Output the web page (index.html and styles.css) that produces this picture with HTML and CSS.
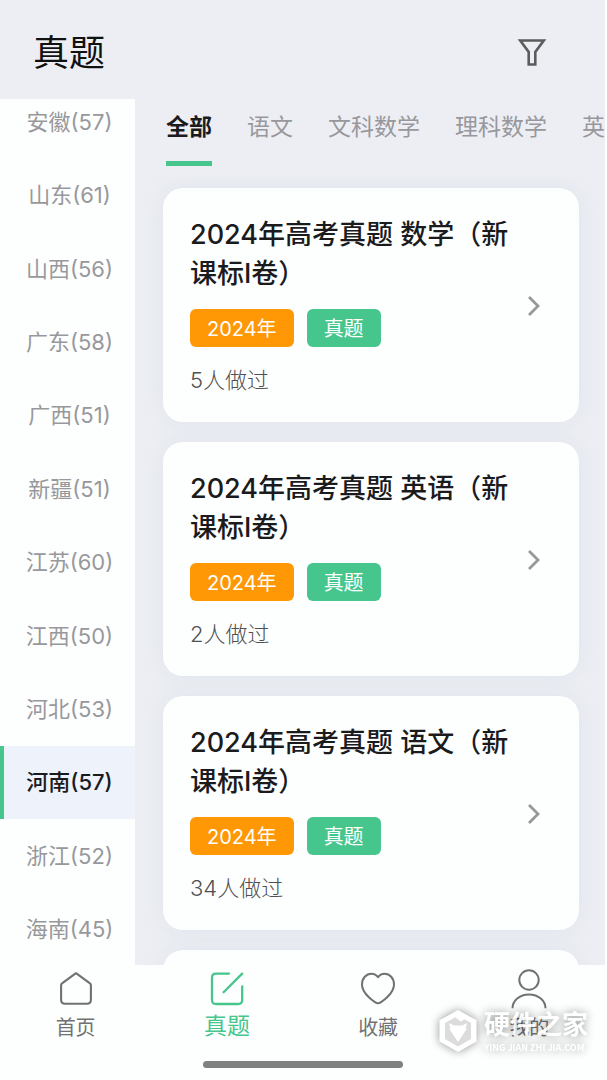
FILE: index.html
```html
<!DOCTYPE html>
<html lang="zh-CN">
<head>
<meta charset="utf-8">
<meta name="viewport" content="width=device-width, initial-scale=1">
<title>真题</title>
<link rel="stylesheet" href="styles.css">
</head>
<body>
<div class="app">
  <header class="header">
    <h1 class="header-title">真题</h1>
    <button class="filter" type="button" aria-label="筛选">
      <svg viewBox="0 0 30 30" width="30" height="30"><path d="M3.2 2.500h23.600L18.300 14v12.500h-6.600V14z" fill="none" stroke="#5c5c5e" stroke-width="2.600"/></svg>
    </button>
  </header>
  <div class="main">
    <nav class="sidebar" aria-label="地区">
      <ul class="regions">
        <li><button class="region" type="button">安徽(57)</button></li>
        <li><button class="region" type="button">山东(61)</button></li>
        <li><button class="region" type="button">山西(56)</button></li>
        <li><button class="region" type="button">广东(58)</button></li>
        <li><button class="region" type="button">广西(51)</button></li>
        <li><button class="region" type="button">新疆(51)</button></li>
        <li><button class="region" type="button">江苏(60)</button></li>
        <li><button class="region" type="button">江西(50)</button></li>
        <li><button class="region" type="button">河北(53)</button></li>
        <li><button class="region region-active" type="button">河南(57)</button></li>
        <li><button class="region" type="button">浙江(52)</button></li>
        <li><button class="region" type="button">海南(45)</button></li>
      </ul>
    </nav>
    <main class="content">
      <div class="tabs">
        <button class="tab tab-active" type="button">全部</button>
        <button class="tab" type="button">语文</button>
        <button class="tab" type="button">文科数学</button>
        <button class="tab" type="button">理科数学</button>
        <button class="tab" type="button">英语</button>
      </div>
      <div class="papers">
        <a class="card" href="#math">
          <div class="card-body">
            <h2 class="card-title">2024年高考真题 数学（新课标I卷）</h2>
            <div class="tags"><span class="tag tag-year">2024年</span><span class="tag tag-type">真题</span></div>
            <p class="count">5人做过</p>
          </div>
          <svg class="chevron" viewBox="0 0 14 22" width="14" height="22"><path d="M2 2l9 9-9 9" fill="none" stroke="#97979b" stroke-width="2.800"/></svg>
        </a>
        <a class="card" href="#english">
          <div class="card-body">
            <h2 class="card-title">2024年高考真题 英语（新课标I卷）</h2>
            <div class="tags"><span class="tag tag-year">2024年</span><span class="tag tag-type">真题</span></div>
            <p class="count">2人做过</p>
          </div>
          <svg class="chevron" viewBox="0 0 14 22" width="14" height="22"><path d="M2 2l9 9-9 9" fill="none" stroke="#97979b" stroke-width="2.800"/></svg>
        </a>
        <a class="card" href="#chinese">
          <div class="card-body">
            <h2 class="card-title">2024年高考真题 语文（新课标I卷）</h2>
            <div class="tags"><span class="tag tag-year">2024年</span><span class="tag tag-type">真题</span></div>
            <p class="count">34人做过</p>
          </div>
          <svg class="chevron" viewBox="0 0 14 22" width="14" height="22"><path d="M2 2l9 9-9 9" fill="none" stroke="#97979b" stroke-width="2.800"/></svg>
        </a>
        <div class="card card-empty"></div>
      </div>
    </main>
  </div>
  <footer class="footer">
    <nav class="tabbar" aria-label="主导航">
      <a class="nav-item" href="#home">
        <svg viewBox="0 0 40 40" width="40" height="40"><path d="M20 4.200L34 14.400q.9.700.9 1.800v14.600q0 4-4 4H9.100q-4 0-4-4V16.200q0-1.100.9-1.800z" fill="none" stroke="#717173" stroke-width="2.100" stroke-linejoin="round"/></svg>
        <span>首页</span>
      </a>
      <a class="nav-item nav-active" href="#papers">
        <svg viewBox="0 0 40 40" width="40" height="40"><path d="M22 4.600H9q-4 0-4 4V31q0 4 4 4h22.200q4 0 4-4V17.500M16.600 23.200L35.200 4.600" fill="none" stroke="#46c68c" stroke-width="2.300" stroke-linecap="round"/></svg>
        <span>真题</span>
      </a>
      <a class="nav-item" href="#favorites">
        <svg viewBox="0 0 40 40" width="40" height="40"><path d="M20 34.400C17 33.600 4 25 4 15.400C4 9.200 8.300 4.700 13.300 4.700C16.200 4.700 18.500 6 20 8.200C21.500 6 23.800 4.700 26.700 4.700C31.700 4.700 36 9.200 36 15.400C36 25 23 33.600 20 34.400z" fill="none" stroke="#717173" stroke-width="2" stroke-linejoin="round"/></svg>
        <span>收藏</span>
      </a>
      <a class="nav-item" href="#me">
        <svg viewBox="0 0 40 40" width="40" height="40"><circle cx="20" cy="11" r="9.700" fill="none" stroke="#717173" stroke-width="2"/><path d="M3.500 39.300C3.500 31.500 10.500 25.400 20 25.400S36.500 31.500 36.500 39.300" fill="none" stroke="#717173" stroke-width="2"/></svg>
        <span>我的</span>
      </a>
    </nav>
    <div class="home-bar"></div>
    <div class="watermark">
      <svg viewBox="0 0 38 44" width="38" height="44"><path d="M19 1L37.500 11.300V32.500L19 43L.5 32.500V11.300z" fill="#fff"/><path d="M17 8L6 14V30L19 37.500L32 30V14L25.500 10.200L22 12.500L17.500 9.500z" fill="#d6d6d6"/><path d="M10 14l5 2.500h8l5-2.500-1.500 5.500H28L19 33 10 19.500h1.500z" fill="#fff"/></svg>
      <div class="watermark-text"><span class="watermark-name">硬件之家</span><span class="watermark-url">YING JIAN ZHI JIA.COM</span></div>
    </div>
  </footer>
</div>
</body>
</html>
```
FILE: styles.css
```css
* { box-sizing: border-box; }
body {
  margin: 0;
  background: #fdfffe;
  color: #1b1b1d;
  font-family: Inter, "Noto Sans CJK SC", sans-serif;
}
h1, h2, p, ul { margin: 0; padding: 0; font-weight: 400; }
ul { list-style: none; }
a { color: inherit; text-decoration: none; }
button { border: 0; background: none; padding: 0; font: inherit; color: inherit; }
svg { display: block; flex: none; }

.app {
  display: flex;
  flex-direction: column;
  height: 100vh;
  overflow: hidden;
  background: #eceef3;
  border-right: 2px solid #fdfffe;
}
.header {
  display: flex;
  align-items: center;
  justify-content: space-between;
  height: 99px;
  flex: none;
  padding: 6px 58px 0 33px;
}
.header-title { font-size: 36px; line-height: 48px; color: #111; }

.main { display: flex; flex: 1; min-height: 0; }
.sidebar { width: 135px; flex: none; background: #fdfffe; overflow: hidden; display: flex; }
.regions { flex: 1; display: grid; grid-auto-rows: 1fr; margin: -14px 0 -1px; }
.regions li { display: flex; min-height: 0; }
.region {
  flex: 1;
  padding: 0 4px 0 8px;
  font-size: 22px;
  line-height: 32px;
  color: #98989c;
  white-space: nowrap;
}
.region-active {
  padding-left: 4px;
  border-left: 4px solid #46c68c;
  background: #edf2fb;
  color: #1b1b1d;
  font-weight: 500;
}

.content { flex: 1; min-width: 0; display: flex; flex-direction: column; }
.tabs { display: flex; gap: 35px; height: 77px; flex: none; padding: 0 0 10px 31px; overflow: hidden; }
.tab {
  flex: none;
  padding-bottom: 6px;
  border-bottom: 5px solid transparent;
  font-size: 23px;
  line-height: 32px;
  color: #98989c;
}
.tab-active { font-weight: 700; color: #1b1b1d; border-bottom-color: #46c68c; }

.papers {
  flex: 1;
  min-height: 0;
  overflow: hidden;
  display: flex;
  flex-direction: column;
  gap: 20px;
  padding: 12px 26px 0 28px;
}
.card {
  flex: none;
  display: flex;
  align-items: center;
  justify-content: space-between;
  min-height: 234px;
  padding: 27px 38px 25px 27px;
  border-radius: 20px;
  background: #fdfffe;
  box-shadow: 0 0 20px rgba(180, 195, 215, 0.22);
}
.card-body { flex: 1; max-width: 330px; }
.card-title { font-size: 27px; line-height: 39px; font-weight: 500; }
.tags { display: flex; gap: 13px; margin: 16px 0; }
.tag {
  padding: 2px 17px 0;
  border-radius: 6px;
  color: #fff;
  font-size: 20px;
  line-height: 36px;
}
.tag-year { background: #ff9804; }
.tag-type { background: #46c68c; }
.count { font-size: 22px; line-height: 34px; font-weight: 300; color: #505052; }

.footer { position: relative; flex: none; height: 115px; background: #fdfffe; display: flex; flex-direction: column; align-items: center; }
.tabbar { display: grid; grid-template-columns: repeat(4, 1fr); align-self: stretch; height: 96px; padding: 4px 0 0; }
.nav-item {
  display: flex;
  flex-direction: column;
  align-items: center;
  gap: 4px;
  font-size: 20px;
  line-height: 30px;
  color: #717173;
}
.nav-active { color: #46c68c; font-size: 23px; gap: 2px; }
.home-bar { width: 200px; height: 7px; border-radius: 4px; background: #808080; }
.watermark {
  position: absolute;
  right: 17px;
  bottom: 26px;
  display: flex;
  align-items: center;
  gap: 7px;
  color: #fff;
  opacity: 0.85;
  filter: drop-shadow(0 0 5px rgba(0, 0, 0, 0.5));
}
.watermark-text { display: flex; flex-direction: column; }
.watermark-name { font-size: 26px; line-height: 34px; font-weight: 700; }
.watermark-url { font-family: "Noto Sans CJK SC", sans-serif; font-size: 9px; line-height: 12px; font-weight: 700; white-space: nowrap; }
```
